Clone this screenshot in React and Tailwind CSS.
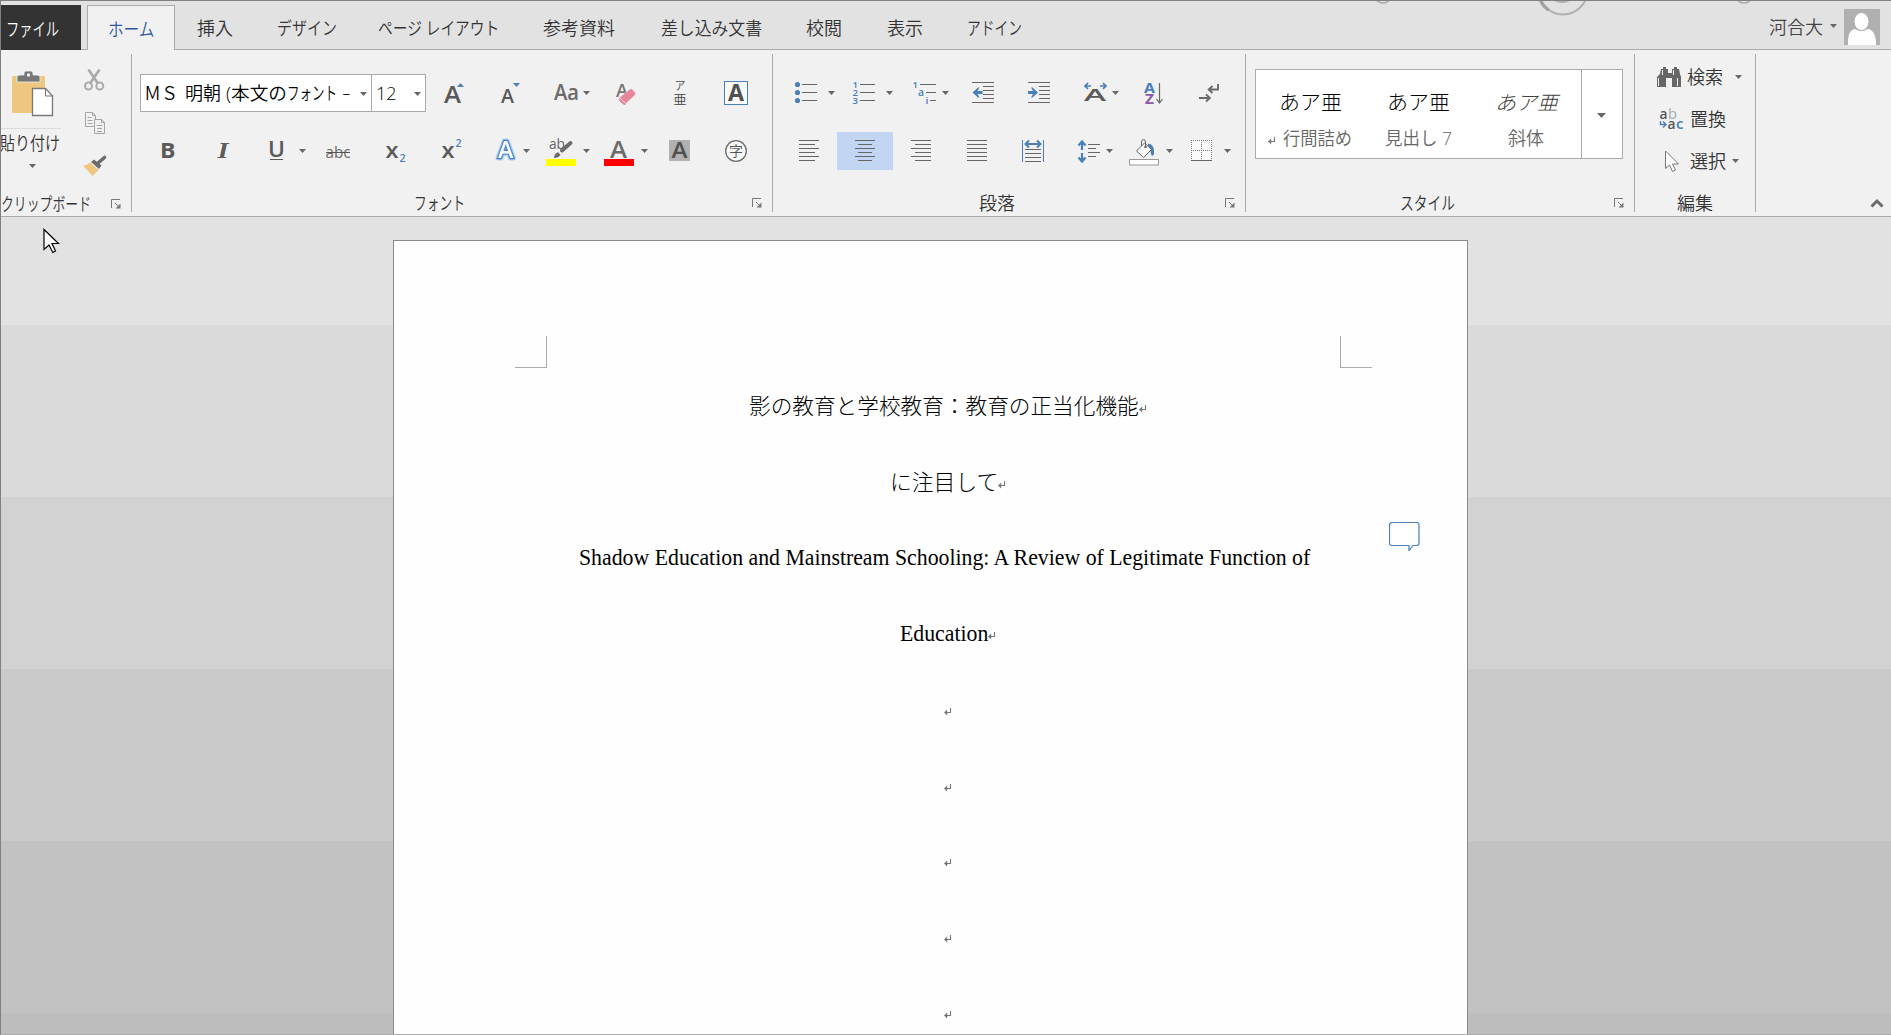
import React, { useLayoutEffect, useRef } from 'react';

const G = '#666666';
const B = '#4a7fb8';
const UI = '"Open Sans","Noto Sans CJK JP",sans-serif';

function Fit({ className = '', children }) {
  const box = useRef(null);
  const txt = useRef(null);
  useLayoutEffect(() => {
    const fit = () => {
      const s = box.current.clientWidth / txt.current.offsetWidth;
      txt.current.style.transform = `scaleX(${s})`;
    };
    fit();
    if (document.fonts) document.fonts.ready.then(fit);
  }, []);
  return (
    <span ref={box} className={`block shrink-0 whitespace-nowrap ${className}`}>
      <span ref={txt} className="inline-block origin-left whitespace-pre">{children}</span>
    </span>
  );
}

/* Icon cell; its drawing uses window coordinates. */
function Cell({ x, y, w, h = 38, className = '', children }) {
  return (
    <svg className={`block shrink-0 ${className}`} width={w} height={h} viewBox={`${x} ${y} ${w} ${h}`} fontFamily={UI}>
      {children}
    </svg>
  );
}

const Down = ({ x, y, s = 7 }) => <path d={`M${x} ${y}h${s}l${-s / 2} ${s / 2 + 0.5}z`} fill={G} />;

const Lines = ({ rows, color = G }) => (
  <path shapeRendering="crispEdges" fill="none" stroke={color} d={rows.map(([a, b, y]) => `M${a} ${y + 0.5}H${b}`).join('')} />
);

const A = ({ x, y, s, w, color = '#595959', weight = 600, children = 'A' }) => (
  <text x={x} y={y} fontSize={s} fontWeight={weight} fill={color} textLength={w} lengthAdjust="spacingAndGlyphs">{children}</text>
);

function Launcher() {
  return (
    <svg width="10" height="10" viewBox="0 0 10 10" className="block shrink-0">
      <path d="M.5 9V.5H9" fill="none" stroke="#777" />
      <path d="M4 4l4 4" stroke="#777" />
      <path d="M9.5 4.5v5h-5z" fill="#777" />
    </svg>
  );
}

const Sep = () => <div className="mt-[4px] h-[158px] w-px shrink-0 bg-[#ababab]" />;

function Mark({ className = '' }) {
  return (
    <svg width="8" height="8" viewBox="0 0 8 8" className={`block shrink-0 ${className}`}>
      <path d="M6.500 0v4.500H2" fill="none" stroke="#777" strokeWidth="1.100" />
      <path d="M0 4.500l3.200-3v6z" fill="#777" />
    </svg>
  );
}

function Tabs() {
  return (
    <div className="relative flex h-[49px] items-end border-b border-[#ababab] text-[18px] leading-[26px] text-[#333]">
      <svg className="absolute left-[1369px] top-0" width="400" height="16" viewBox="1370 1 400 16" fill="none">
        <circle cx="1383" cy="-5" r="8" stroke="#a8a8a8" strokeWidth="1.500" />
        <circle cx="1563" cy="-10" r="24.500" stroke="#b0b0b0" strokeWidth="2" />
        <path d="M1538.500-8q1 12 10 18" stroke="#a0a0a0" strokeWidth="3" />
        <circle cx="1562" cy="-13" r="16" fill="#b0b0b0" />
        <circle cx="1744" cy="-5" r="8" stroke="#a8a8a8" strokeWidth="1.500" />
      </svg>
      <div className="-mb-px h-[45px] w-[80px] shrink-0 bg-[#333] pl-[5px] pt-[11px] text-white">
        <Fit className="w-[53px]">ファイル</Fit>
      </div>
      <div className="-mb-px ml-[6px] flex h-[45px] w-[88px] shrink-0 justify-center border border-b-0 border-[#ababab] bg-[#f1f1f1] pt-[10px] text-[#2b579a]">
        <Fit className="w-[46px]">ホーム</Fit>
      </div>
      <div className="flex h-[44px] pt-[10px]">
        <Fit className="ml-[22px] w-[36px]">挿入</Fit>
        <Fit className="ml-[44px] w-[60px]">デザイン</Fit>
        <Fit className="ml-[41px] w-[121px]">ページ レイアウト</Fit>
        <Fit className="ml-[44px] w-[72px]">参考資料</Fit>
        <Fit className="ml-[46px] w-[101px]">差し込み文書</Fit>
        <Fit className="ml-[44px] w-[36px]">校閲</Fit>
        <Fit className="ml-[45px] w-[36px]">表示</Fit>
        <Fit className="ml-[44px] w-[55px]">アドイン</Fit>
      </div>
      <div className="ml-auto flex h-[48px] pr-[11px]">
        <Fit className="mt-[13px] w-[54px] text-[#444]">河合大</Fit>
        <Cell x={1823} y={1} w={21} h={48}><Down x={1830} y={24} /></Cell>
        <svg width="36" height="36" viewBox="0 0 36 36" className="mt-[8px] block">
          <path fill="#b0b0b0" d="M0 0h36v36H0z" />
          <path d="M4 36c0-9 1-15 7-16q6.500 4 13 0c6 1 8 7 8 16z" fill="#fff" />
          <ellipse cx="17.500" cy="12.500" rx="7.500" ry="9" fill="#fff" stroke="#b0b0b0" />
        </svg>
      </div>
    </div>
  );
}

function Clipboard() {
  return (
    <div className="flex w-[130px] shrink-0 flex-col overflow-hidden">
      <div className="flex h-[138px]">
        <div className="flex w-[60px] flex-col">
          <Cell x={1} y={50} w={60} h={78}>
            <rect x="12" y="76" width="33" height="37" rx="1.500" fill="#edc680" />
            <path d="M17 82v-5q0-2 3-2h4v-2q0-2 2-2h5q2 0 2 2v2h4q3 0 3 2v5z" fill="#777" stroke="#f1f1f1" strokeWidth=".8" />
            <circle cx="28.500" cy="75" r="1.700" fill="#f1f1f1" />
            <path d="M32.500 88.500h13l7 7.500v19.500h-20z" fill="#fff" stroke="#777" strokeWidth="1.300" />
            <path d="M45.500 88.500v7.500h7" fill="none" stroke="#777" />
          </Cell>
          <div className="h-px bg-[#dcdcdc]" />
          <Fit className="-ml-[1px] mt-[1px] w-[60px] text-[18px] leading-[26px] text-[#333]">貼り付け</Fit>
          <Cell x={1} y={156} w={60} h={20}><Down x={29} y={164} /></Cell>
        </div>
        <div className="flex flex-col">
          <Cell x={61} y={50} w={60} h={51}>
            <g stroke="#aaa" fill="none" strokeWidth="2">
              <path d="M88.500 69.500l9.500 14M99.500 69.500L90 83.500" strokeWidth="2.600" />
              <circle cx="88.500" cy="86" r="3.500" /><circle cx="99.800" cy="86" r="3.500" />
            </g>
          </Cell>
          <Cell x={61} y={101} w={60} h={44}>
            <g stroke="#a5a5a5" fill="#f1f1f1">
              <path d="M85.500 112.500h7l3 3v11h-10z M92.500 112.500v3h3" />
              <path d="M94.500 119.500h7l3 3v11h-10z M101.500 119.500v3h3M97 125.500h5M97 128.500h5M97 131.500h5M87.500 117.500h4M87.500 120.500h5M87.500 123.500h5" />
            </g>
          </Cell>
          <Cell x={61} y={145} w={60} h={43}>
            <path d="M83 165.500q4 0 7-3l8.500 7.500-6 6z" fill="#edc680" />
            <path d="M91 162l3-2.500 7.500 6-2.500 3.500z" fill="#6c6c6c" />
            <path d="M98 163l6.500-5.500" stroke="#6c6c6c" strokeWidth="3.600" strokeLinecap="round" />
          </Cell>
        </div>
      </div>
      <div className="mt-[2px] flex h-[28px] shrink-0 items-center text-[18px] leading-[26px] text-[#333]">
        <Fit className="w-[90px]">クリップボード</Fit>
        <div className="ml-[20px]"><Launcher /></div>
      </div>
    </div>
  );
}

function FontGroup() {
  return (
    <div className="flex w-[640px] shrink-0 flex-col">
      <div className="mt-[24px] flex h-[38px]">
        <div className="ml-[8px] flex w-[232px] items-center border border-[#ababab] bg-white text-[18px] leading-[26px] text-black">
          <Fit className="ml-[3px] w-[34px]">ＭＳ</Fit>
          <Fit className="ml-[7px] w-[36px]">明朝</Fit>
          <Fit className="ml-[5px] w-[61px]">(本文の</Fit>
          <Fit className="w-[50px]">フォント</Fit>
          <Fit className="ml-[5px] w-[9px]">-</Fit>
          <Cell x={351} y={74} w={20} h={36}><Down x={360} y={91} /></Cell>
        </div>
        <div className="flex w-[54px] items-center border border-l-0 border-[#ababab] bg-white text-[18px] leading-[26px] text-black">
          <Fit className="ml-[4px] w-[21px]">12</Fit>
          <Cell x={397} y={74} w={28} h={36}><Down x={414} y={91} /></Cell>
        </div>
        <Cell x={426} y={74} w={59}>
          <A x={444} y={103} s={23} w={17} />
          <path d="M457 87h7l-3.500-4z" fill={B} />
        </Cell>
        <Cell x={485} y={74} w={55}>
          <A x={501} y={103} s={20} w={13} />
          <path d="M513 83h7l-3.500 4z" fill={B} />
        </Cell>
        <Cell x={540} y={74} w={65}>
          <A x={554} y={100} s={21} w={25} color="#6b6b6b">Aa</A>
          <Down x={583} y={91} />
        </Cell>
        <Cell x={605} y={74} w={55}>
          <A x={616} y={97} s={18} w={12} color="#757575" />
          <path d="M629.500 89.500q1.500-1.500 3 0l2.500 3q1 1.500 0 2.500l-9 8.500-6.500-6z" fill="#e6869a" stroke="#f1f1f1" strokeWidth=".4" />
          <path d="M619.500 98.500l6 5.500-1 .5q-1.500 0-5-4z" fill="#e6869a" stroke="#e6869a" />
        </Cell>
        <Cell x={660} y={74} w={50}>
          <text x="674.500" y="90" fontSize="11" fill="#444">ア</text>
          <text x="673.500" y="104" fontSize="13" fill="#444">亜</text>
        </Cell>
        <Cell x={710} y={74} w={60}>
          <rect x="724.500" y="81.500" width="23" height="23" fill="#fafafa" stroke={B} />
          <A x={728} y={101} s={23} w={16} color="#505050" weight={700} />
        </Cell>
      </div>
      <div className="mt-[20px] flex h-[38px]">
        <Cell x={132} y={132} w={64}><A x={160} y={158} s={22} w={15.500} weight={700}>B</A></Cell>
        <Cell x={196} y={132} w={54}>
          <text x="217.500" y="158" fontSize="24" fontWeight="bold" fontStyle="italic" fontFamily="Liberation Serif" fill="#5d5d5d" textLength="11" lengthAdjust="spacingAndGlyphs">I</text>
        </Cell>
        <Cell x={250} y={132} w={66}>
          <A x={268} y={157} s={21} w={17}>U</A>
          <Lines rows={[[270, 283, 159]]} color="#595959" />
          <Down x={299} y={149} />
        </Cell>
        <Cell x={316} y={132} w={50}>
          <A x={325.500} y={158} s={17} w={25} color="#6b6b6b" weight={400}>abc</A>
          <Lines rows={[[326, 350, 152]]} color="#555" />
        </Cell>
        <Cell x={366} y={132} w={56}>
          <A x={385.500} y={158} s={22} w={13}>x</A>
          <A x={399.500} y={162} s={10} w={6} color={B}>2</A>
        </Cell>
        <Cell x={422} y={132} w={63}>
          <A x={441.500} y={158} s={22} w={13}>x</A>
          <A x={455.500} y={147} s={10} w={6} color={B}>2</A>
        </Cell>
        <Cell x={485} y={132} w={55}>
          <text x="498" y="158" fontSize="23" fontWeight="600" fill="#fff" stroke="#b4d0ee" strokeWidth="5" strokeLinejoin="round">A</text>
          <text x="498" y="158" fontSize="23" fontWeight="600" fill="#fff" stroke="#3f7fc4" strokeWidth="2.400" paintOrder="stroke">A</text>
          <Down x={523} y={149} />
        </Cell>
        <Cell x={540} y={132} w={57}>
          <A x={549} y={149} s={14} w={16} color="#666" weight={400}>ab</A>
          <path d="M562 150.500l8.500-7.500" stroke="#6c6c6c" strokeWidth="4" strokeLinecap="round" />
          <path d="M554 158q0-4 4-6l2.500 3q-2 3-6.500 3z" fill="#6c6c6c" />
          <path d="M546 159h30v7h-30z" fill="#ff0" />
          <Down x={583} y={149} />
        </Cell>
        <Cell x={597} y={132} w={58}>
          <A x={610} y={158} s={23} w={17} color="#6b6b6b" />
          <path d="M604 159h30v7h-30z" fill="#f00" />
          <Down x={641} y={149} />
        </Cell>
        <Cell x={655} y={132} w={50}>
          <path d="M669 140h21v21h-21z" fill="#b1b1b1" />
          <A x={671.500} y={158} s={22} w={16} color="#505050" weight={600} />
        </Cell>
        <Cell x={705} y={132} w={60}>
          <circle cx="736" cy="151" r="10.300" fill="#fafafa" stroke="#6b6b6b" strokeWidth="1.300" />
          <text x="729" y="156" fontSize="14" fill="#555">字</text>
        </Cell>
      </div>
      <div className="mt-[20px] flex h-[28px] items-center text-[18px] leading-[26px] text-[#333]">
        <Fit className="ml-[282px] w-[51px]">フォント</Fit>
        <div className="ml-auto mr-[10px]"><Launcher /></div>
      </div>
    </div>
  );
}

const rowsOf = (a, b, c, d) => [0, 1, 2, 3, 4, 5].map((i) => (i % 2 ? [c, d, 140 + i * 4] : [a, b, 140 + i * 4]));

function Paragraph() {
  return (
    <div className="flex w-[472px] shrink-0 flex-col">
      <div className="mt-[24px] flex h-[38px]">
        <Cell x={773} y={74} w={70}>
          {[84.5, 92.5, 100.5].map((y) => <circle key={y} cx="797.500" cy={y} r="2.600" fill={B} />)}
          <Lines rows={[[802, 817, 84], [802, 817, 92], [802, 817, 100]]} />
          <Down x={828} y={91} />
        </Cell>
        <Cell x={843} y={74} w={60}>
          {[['1', 88], ['2', 96], ['3', 104]].map(([n, y]) => <A key={n} x={852.500} y={y} s={9.500} w={5.500} color={B}>{n}</A>)}
          <Lines rows={[[860, 875, 84], [860, 875, 92], [860, 875, 100]]} />
          <Down x={886} y={91} />
        </Cell>
        <Cell x={903} y={74} w={57}>
          <A x={912.500} y={88} s={9.500} w={5.500} color={B}>1</A>
          <A x={918} y={96} s={10} w={6} color={B}>a</A>
          <A x={925.500} y={104} s={9.500} w={3} color={B}>i</A>
          <Lines rows={[[920, 936, 84], [926, 936, 92], [930, 936, 100]]} />
          <Down x={942} y={91} />
        </Cell>
        <Cell x={960} y={74} w={56}>
          <Lines rows={[[972, 994, 82], [983, 994, 86], [983, 994, 90], [983, 994, 94], [983, 994, 98], [972, 994, 102]]} />
          <path d="M972.500 92.500l5.500-5h1.500l-2 3.500h5v3h-5l2 3.500H978z" fill={B} />
        </Cell>
        <Cell x={1016} y={74} w={56}>
          <Lines rows={[[1028, 1050, 82], [1039, 1050, 86], [1039, 1050, 90], [1039, 1050, 94], [1039, 1050, 98], [1028, 1050, 102]]} />
          <path d="M1038 92.500l-5.500-5h-1.500l2 3.500h-5v3h5l-2 3.500h1.500z" fill={B} />
        </Cell>
        <Cell x={1072} y={74} w={60}>
          <path d="M1091 86h-6m3-2.800l-3 2.800 3 2.800M1100 86h6m-3-2.800l3 2.800-3 2.800" fill="none" stroke={B} strokeWidth="1.700" />
          <A x={1084} y={101} s={17} w={22} />
          <Down x={1112} y={91} />
        </Cell>
        <Cell x={1132} y={74} w={50}>
          <A x={1144} y={93} s={15} w={11} color={B} weight={700} />
          <A x={1145} y={104} s={14} w={9} color="#8c55ab" weight={700}>Z</A>
          <path d="M1159.500 83v20m-3-4l3 4 3-4" fill="none" stroke={G} strokeWidth="1.200" />
        </Cell>
        <Cell x={1182} y={74} w={60}>
          <path d="M1218 84v5.500h-9m3.500-3.500l-3.800 3.500 3.800 3.500M1199 98h10.500m-3.500-3.500l3.800 3.500-3.800 3.500" fill="none" stroke="#6b6b6b" strokeWidth="1.900" />
        </Cell>
      </div>
      <div className="mt-[20px] flex h-[38px]">
        <Cell x={773} y={132} w={64}><Lines rows={rowsOf(799, 819, 799, 815)} /></Cell>
        <Cell x={837} y={132} w={56} className="bg-[#c2d5f2]"><Lines rows={rowsOf(855, 875, 858, 872)} /></Cell>
        <Cell x={893} y={132} w={56}><Lines rows={rowsOf(911, 931, 915, 931)} /></Cell>
        <Cell x={949} y={132} w={56}><Lines rows={rowsOf(967, 987, 967, 987)} /></Cell>
        <Cell x={1005} y={132} w={60}>
          <path d="M1022.500 140v22M1043.500 140v22" stroke={B} />
          <path d="M1026 144h14M1029 140.500l-3.500 3.500 3.500 3.500M1037 140.500l3.500 3.500-3.500 3.500" fill="none" stroke={B} strokeWidth="2" />
          <Lines rows={[[1025, 1041, 149], [1025, 1041, 153], [1025, 1041, 157], [1025, 1041, 161]]} />
        </Cell>
        <Cell x={1065} y={132} w={56}>
          <path d="M1082 150v-8m-3.500 3.500l3.500-4 3.500 4M1082 153v8m-3.500-3.500l3.500 4 3.500-4" fill="none" stroke={B} strokeWidth="2.200" />
          <Lines rows={[[1088, 1100, 144], [1088, 1096, 148], [1088, 1100, 152], [1088, 1096, 156]]} />
          <Down x={1106} y={149} />
        </Cell>
        <Cell x={1121} y={132} w={60}>
          <path d="M1148 143.500q6 1 6 7.500v3q-1 2.500-2.500 1.500-.5-5-3.500-8z" fill={B} />
          <path d="M1136.500 151l8-8 7 6.500-8 8z" fill="#fafafa" stroke={G} />
          <path d="M1141.500 146v-4q0-2.500 2-2.500t2 2.500v6" fill="none" stroke={G} />
          <circle cx="1145.500" cy="147" r="1.300" fill={G} />
          <path d="M1129.500 159.500h29v5.500h-29z" fill="#fff" stroke="#999" />
          <Down x={1166} y={149} />
        </Cell>
        <Cell x={1181} y={132} w={60}>
          <path d="M1191 140h21v20h-21z" fill="#fafafa" />
          <path d="M1191 140.500h21M1191 150.500h21M1191.500 140v20M1201.500 140v20M1211.500 140v20" fill="none" stroke="#777" strokeDasharray="1 1" shapeRendering="crispEdges" />
          <Lines rows={[[1191, 1212, 160]]} />
          <Down x={1224} y={149} />
        </Cell>
      </div>
      <div className="mt-[20px] flex h-[28px] items-center text-[18px] leading-[26px] text-[#333]">
        <Fit className="ml-[206px] w-[36px]">段落</Fit>
        <div className="ml-auto mr-[10px]"><Launcher /></div>
      </div>
    </div>
  );
}

function Style({ sample, cls, children }) {
  return (
    <div className="flex w-[108px] flex-col items-center">
      <div className={`mt-[19px] text-[20px] font-light leading-[28px] ${cls}`}><Fit className="w-[63px]">{sample}</Fit></div>
      <div className="mt-[7px] flex items-center text-[18px] leading-[28px] text-[#666]">{children}</div>
    </div>
  );
}

function Styles() {
  return (
    <div className="flex w-[388px] shrink-0 flex-col">
      <div className="ml-[9px] mt-[19px] flex h-[90px] w-[368px] border border-[#ababab] bg-white">
        <div className="flex w-[325px]">
          <Style sample="あア亜" cls="text-black"><Mark className="mr-[7px] mt-[5px]" /><Fit className="w-[69px]">行間詰め</Fit></Style>
          <Style sample="あア亜" cls="text-black"><Fit className="w-[67px]">見出し 7</Fit></Style>
          <Style sample="あア亜" cls="italic text-[#404040]"><Fit className="w-[36px]">斜体</Fit></Style>
        </div>
        <div className="border-l border-[#ababab]">
          <Cell x={1582} y={70} w={40} h={88}><Down x={1597} y={113} s={9} /></Cell>
        </div>
      </div>
      <div className="mt-[31px] flex h-[28px] items-center text-[18px] leading-[26px] text-[#333]">
        <Fit className="ml-[154px] w-[55px]">スタイル</Fit>
        <div className="ml-auto mr-[10px]"><Launcher /></div>
      </div>
    </div>
  );
}

function Editing() {
  return (
    <div className="flex w-[120px] shrink-0 flex-col text-[18px] leading-[28px] text-[#333]">
      <div className="mt-[8px] flex h-[38px] items-center">
        <Cell x={1635} y={58} w={52}>
          <g fill="#666">
            <path d="M1657 87V77l3-3 1-5h2v-2h3v2h2v4h4v-4h2v-2h3v2h2l1 5 1 3v10h-9v-9h-6v9z" />
            <path d="M1662.500 70v5M1658.500 78v8M1673.500 70v5M1677.500 78v8" stroke="#f1f1f1" />
          </g>
        </Cell>
        <Fit className="w-[36px]">検索</Fit>
        <Cell x={1723} y={58} w={28}><Down x={1735} y={75} /></Cell>
      </div>
      <div className="mt-[4px] flex h-[38px] items-center">
        <Cell x={1635} y={100} w={55}>
          <A x={1659.500} y={119} s={14.500} w={8} color="#555">a</A>
          <A x={1668} y={119} s={14.500} w={9} color="#aaa" weight={400}>b</A>
          <A x={1667.500} y={129} s={14.500} w={8} color="#555">a</A>
          <A x={1676} y={129} s={14.500} w={7.500} color={B}>c</A>
          <path d="M1660.500 121v3.500h5m-2.500-3l3 3-3 3" fill="none" stroke={B} strokeWidth="1.400" />
        </Cell>
        <Fit className="w-[36px]">置換</Fit>
      </div>
      <div className="mt-[4px] flex h-[38px] items-center">
        <Cell x={1635} y={142} w={55}>
          <path d="M1665.500 151v17.500l4-3.500 3 6.500 3-1.500-3-6h6z" fill="#fff" stroke="#777" />
        </Cell>
        <Fit className="w-[36px]">選択</Fit>
        <Cell x={1726} y={142} w={25}><Down x={1732} y={159} /></Cell>
      </div>
      <div className="mt-[10px] flex h-[28px] items-center leading-[26px]">
        <Fit className="ml-[42px] w-[36px]">編集</Fit>
      </div>
    </div>
  );
}

function Line({ children }) {
  return (
    <div className="flex h-[75.800px] items-center justify-center">
      {children}
      <span className="relative top-[3px] w-0"><Mark /></span>
    </div>
  );
}

function Workspace() {
  return (
    <div className="relative flex h-[817px] justify-center">
      <div className="absolute inset-0 flex flex-col">
        <div className="h-[108px] bg-[#e2e2e2]" />
        <div className="h-[172px] bg-[#dadada]" />
        <div className="h-[172px] bg-[#d2d2d2]" />
        <div className="h-[172px] bg-[#cacaca]" />
        <div className="h-[172px] bg-[#c2c2c2]" />
        <div className="h-[21px] bg-[#bdbdbd]" />
      </div>
      <div className="relative ml-[-32px] mt-[23px] flex w-[1075px] flex-col overflow-hidden border border-b-0 border-[#8a8a8a] bg-[#fefefe]">
        <div className="mt-[95px] flex justify-between pl-[121px] pr-[95px]">
          <div className="h-[32px] w-[32px] border-b border-r border-[#ababab]" />
          <div className="h-[32px] w-[32px] border-b border-l border-[#ababab]" />
        </div>
        <div className="ml-[153px] w-[795px] text-[21.600px] leading-[30px] text-black">
          <Line><Fit className="w-[390px] font-light">影の教育と学校教育：教育の正当化機能</Fit></Line>
          <Line><Fit className="w-[108px] font-light">に注目して</Fit></Line>
          <div className="flex h-[75.600px] items-center justify-center font-['Liberation_Serif',serif] text-[24px]">
            <Fit className="w-[731px]">Shadow Education and Mainstream Schooling: A Review of Legitimate Function of</Fit>
          </div>
          <Line><Fit className="w-[88px] font-['Liberation_Serif',serif] text-[24px]">Education</Fit></Line>
          <Line /><Line /><Line /><Line /><Line />
        </div>
        <svg className="absolute left-[995px] top-[281px]" width="31" height="29" viewBox="0 0 31 29">
          <path d="M3.500.5h24q2.500 0 2.500 2.500v18q0 2.500-2.500 2.500H24l-4 5v-5H3.500Q.5 23.500.5 21V3Q.5.5 3.500.5z" fill="#fff" stroke="#4a7fb8" strokeWidth="1.200" />
        </svg>
      </div>
      <svg className="absolute left-[42px] top-[11px]" width="18" height="27" viewBox="0 0 18 27">
        <path d="M1 1.500v20l5-4.500 3.800 7.500 2.700-1.500-3.500-7.500h6.500z" fill="#fff" stroke="#000" strokeWidth="1.200" />
      </svg>
    </div>
  );
}

export default function App() {
  return (
    <div className="h-[1035px] w-[1891px] overflow-hidden border-b border-l border-t border-[#808080] border-b-[#aeaeae] bg-[#e2e2e2] font-['Open_Sans','Noto_Sans_CJK_JP',sans-serif] font-[350]">
      <Tabs />
      <div className="flex h-[167px] border-b border-[#ababab] bg-[#f1f1f1]">
        <Clipboard />
        <Sep />
        <FontGroup />
        <Sep />
        <Paragraph />
        <Sep />
        <Styles />
        <Sep />
        <Editing />
        <Sep />
        <svg className="mb-[8px] ml-auto mr-[7px] block self-end" width="14" height="10" viewBox="0 0 14 10">
          <path d="M1.500 8.500L7 3l5.500 5.500" fill="none" stroke="#6b6b6b" strokeWidth="3" />
        </svg>
      </div>
      <Workspace />
    </div>
  );
}
